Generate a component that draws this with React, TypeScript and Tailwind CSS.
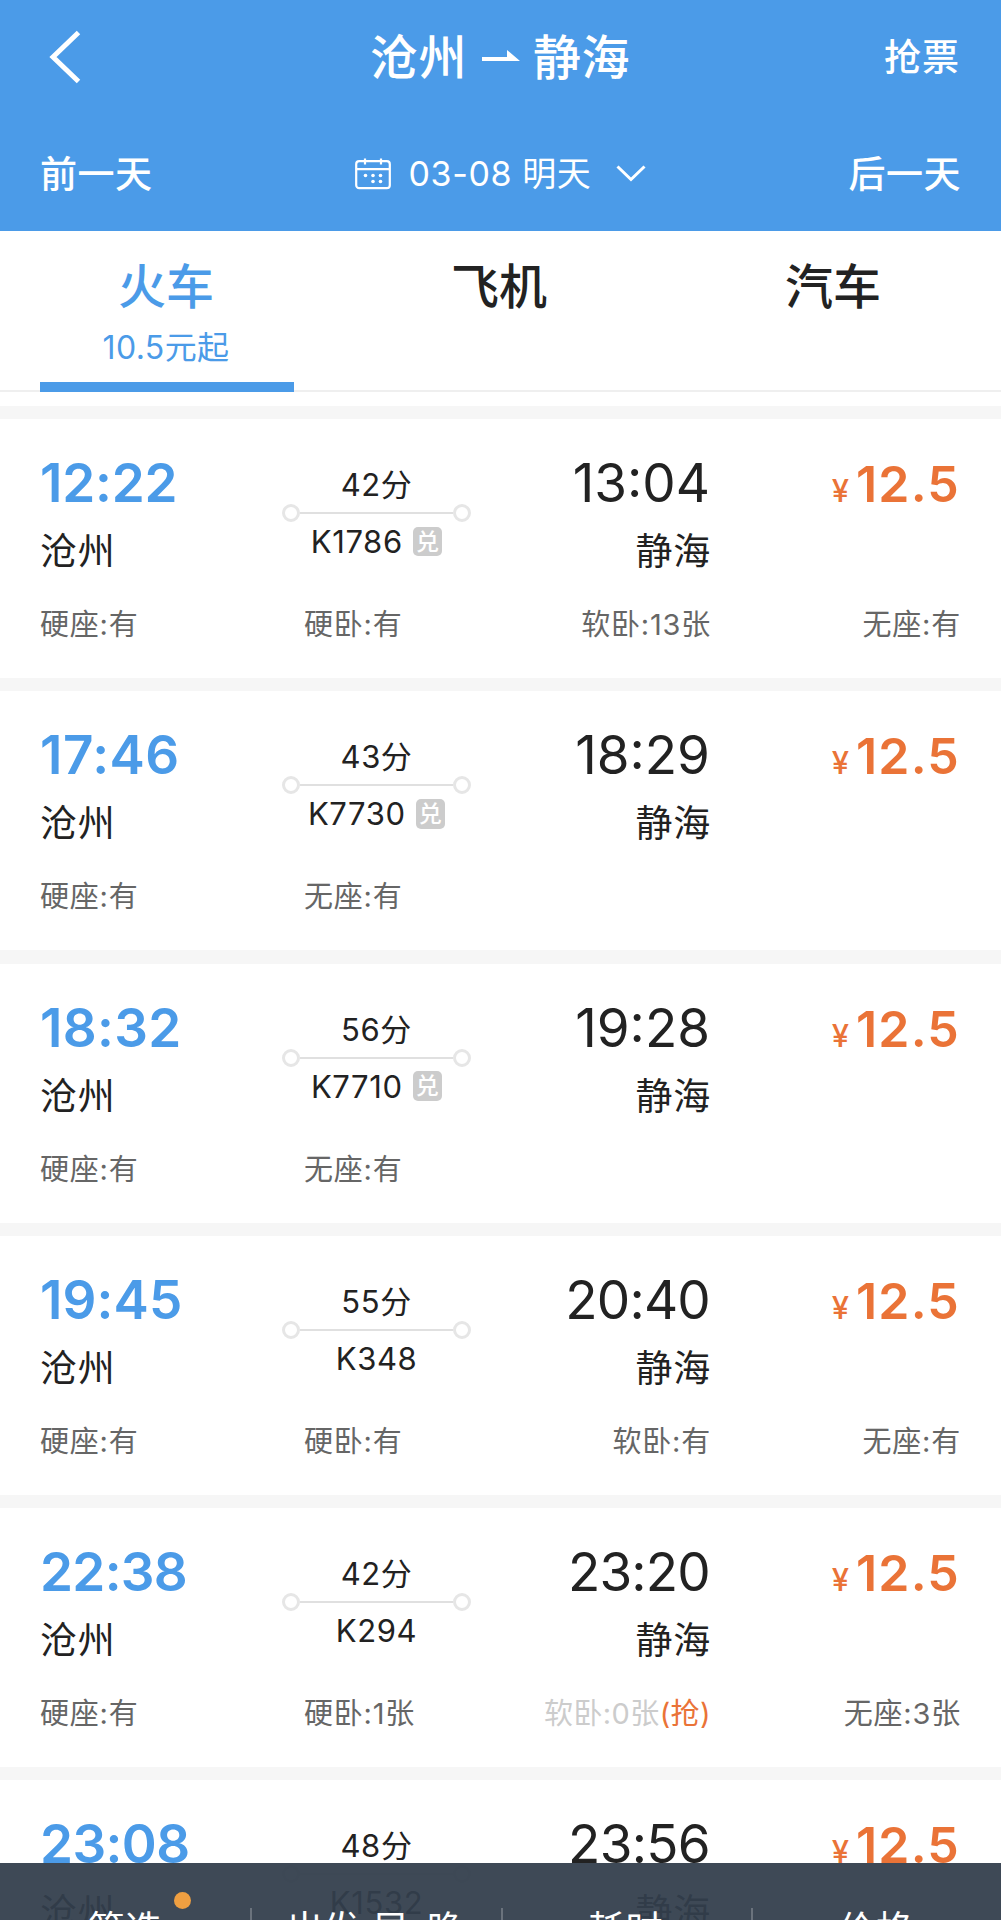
import React from "react";

type Seat = { text: string; empty?: boolean };
type Train = {
  depart: string;
  departTracking: string;
  arrive: string;
  arriveTracking: string;
  duration: string;
  code: string;
  exchange?: boolean;
  seats: Seat[];
};

const trains: Train[] = [
  { depart: "12:22", departTracking: "tracking-[-0.2px]", arrive: "13:04", arriveTracking: "tracking-normal", duration: "42分", code: "K1786", exchange: true, seats: [{ text: "硬座:有" }, { text: "硬卧:有" }, { text: "软卧:13张" }, { text: "无座:有" }] },
  { depart: "17:46", departTracking: "tracking-[0.5px]", arrive: "18:29", arriveTracking: "tracking-normal", duration: "43分", code: "K7730", exchange: true, seats: [{ text: "硬座:有" }, { text: "无座:有" }] },
  { depart: "18:32", departTracking: "tracking-[0.3px]", arrive: "19:28", arriveTracking: "tracking-normal", duration: "56分", code: "K7710", exchange: true, seats: [{ text: "硬座:有" }, { text: "无座:有" }] },
  { depart: "19:45", departTracking: "tracking-[0.1px]", arrive: "20:40", arriveTracking: "tracking-[-0.8px]", duration: "55分", code: "K348", seats: [{ text: "硬座:有" }, { text: "硬卧:有" }, { text: "软卧:有" }, { text: "无座:有" }] },
  { depart: "22:38", departTracking: "tracking-[-0.7px]", arrive: "23:20", arriveTracking: "tracking-[-0.8px]", duration: "42分", code: "K294", seats: [{ text: "硬座:有" }, { text: "硬卧:1张" }, { text: "软卧:0张", empty: true }, { text: "无座:3张" }] },
  { depart: "23:08", departTracking: "tracking-[-0.6px]", arrive: "23:56", arriveTracking: "tracking-[-0.7px]", duration: "48分", code: "K1532", seats: [{ text: "硬座:有" }, { text: "硬卧:有" }, { text: "软卧:有" }, { text: "无座:有" }] },
];

function Header() {
  return (
    <header className="h-[231px] shrink-0 bg-[#4b9be8] text-white">
      <div className="flex h-[114px] items-center justify-between pl-[49px] pr-[41px]">
        <div className="w-[109px]">
          <svg className="block" width="32" height="54" viewBox="0 0 32 54" fill="none" stroke="currentColor" strokeWidth="5">
            <path d="M29.5 2.5 4 27l25.5 24.5" />
          </svg>
        </div>
        <h1 className="flex items-center text-[48px] leading-[60px] font-medium tracking-[0.5px]">
          <span className="pt-[2px]">沧州</span>
          <svg className="ml-[15px] mr-[13px] block" width="38" height="16" viewBox="0 0 38 16" fill="currentColor">
            <path d="M0 8h25V1l13 11H0z" />
          </svg>
          <span className="pt-[2px]">静海</span>
        </h1>
        <button className="w-[118px] pt-[2px] text-right text-[37px] leading-[48px] font-medium tracking-[1px]">抢票</button>
      </div>
      <div className="flex h-[120px] items-center justify-between pl-[40px] pr-[40px]">
        <button className="w-[113px] pt-[2px] text-left text-[37px] leading-[48px] font-medium tracking-[0.5px] whitespace-nowrap">前一天</button>
        <div className="flex items-center">
          <svg className="block" width="36" height="32" viewBox="0 0 36 32" fill="none" stroke="currentColor" strokeWidth="2.2">
            <rect x="1.2" y="3.2" width="33.6" height="27" rx="3" />
            <path d="M1 11.2h34M10 0.5v6M26 0.5v6" />
            <g fill="currentColor" stroke="none">
              <circle cx="10.5" cy="17.5" r="1.8" />
              <circle cx="18" cy="17.5" r="1.8" />
              <circle cx="25.5" cy="17.5" r="1.8" />
              <circle cx="18" cy="23.5" r="1.8" />
              <circle cx="25.5" cy="23.5" r="1.8" />
            </g>
          </svg>
          <span className="ml-[18px] text-[34px] leading-[48px] tracking-[0.6px]">03-08 明天</span>
          <svg className="ml-[25px] block" width="30" height="18" viewBox="0 0 30 18" fill="none" stroke="currentColor" strokeWidth="3">
            <path d="M1.5 1.5 15 14.5 28.5 1.5" />
          </svg>
        </div>
        <button className="w-[113px] pt-[2px] text-right text-[37px] leading-[48px] font-medium tracking-[0.5px] whitespace-nowrap">后一天</button>
      </div>
    </header>
  );
}

function Tabs() {
  return (
    <nav className="flex h-[161px] shrink-0 border-b-2 border-[#efefef] bg-white text-[#222]">
      <div className="relative flex flex-1 flex-col items-center pt-[26px] pr-[1px] text-[#4b9be8]">
        <span className="text-[48px] leading-[60px] font-medium">火车</span>
        <span className="mt-[11px] text-[32px] leading-[40px] tracking-[0.4px]">10.5元起</span>
        <span className="absolute -bottom-[2px] left-[40px] h-[10px] w-[254px] bg-[#4b9be8]" />
      </div>
      <div className="flex flex-1 flex-col items-center pt-[26px] pr-[2px]">
        <span className="text-[48px] leading-[60px] font-medium">飞机</span>
      </div>
      <div className="flex flex-1 flex-col items-center pt-[26px] pr-[2px]">
        <span className="text-[48px] leading-[60px] font-medium">汽车</span>
      </div>
    </nav>
  );
}

function Route({ train }: { train: Train }) {
  return (
    <div className="flex flex-col items-center pt-[48px] text-[31px] tracking-[0.6px]">
      <span className="h-[36px] leading-[36px]">{train.duration}</span>
      <div className="mt-px flex h-[18px] w-full items-center">
        <span className="size-[18px] rounded-full border-[3px] border-[#e6e6e6]" />
        <span className="h-[2px] flex-1 bg-[#e0e0e0]" />
        <span className="size-[18px] rounded-full border-[3px] border-[#e6e6e6]" />
      </div>
      <div className="mt-[2px] flex h-[35px] items-center leading-[35px]">
        <span>{train.code}</span>
        {train.exchange && (
          <span className="ml-[10px] size-[29.5px] rounded-[5px] bg-[#ccc] text-center text-[23px] leading-[30px] font-medium tracking-normal text-white">兑</span>
        )}
      </div>
    </div>
  );
}

function TrainCard({ train }: { train: Train }) {
  return (
    <article className="mb-[13.25px] h-[259px] shrink-0 bg-white pl-[40px] text-[#222]">
      <div className="grid h-[186px] grid-cols-[242px_189px_239px_250px]">
        <div className="flex flex-col pt-[34px]">
          <span className={`text-[53px] leading-[60px] font-semibold text-[#4b9be8] ${train.departTracking}`}>{train.depart}</span>
          <span className="mt-[14px] text-[37px] leading-[50px] tracking-[0.7px]">沧州</span>
        </div>
        <Route train={train} />
        <div className="flex flex-col items-end pt-[34px]">
          <span className={`text-[53px] leading-[60px] ${train.arriveTracking}`}>{train.arrive}</span>
          <span className="mt-[14px] -mr-px text-[37px] leading-[50px] tracking-[0.7px]">静海</span>
        </div>
        <div className="flex items-baseline justify-end pt-[35px] leading-[60px] font-semibold text-[#ea7337]">
          <span className="text-[31px] font-medium">¥</span>
          <span className="ml-[7px] text-[50px] tracking-[1.2px]">12.5</span>
        </div>
      </div>
      <div className="grid grid-cols-[264px_180px_227px_250px] text-[29px] leading-[40px] tracking-[0.8px] whitespace-nowrap text-[#666]">
        {train.seats.map((seat, i) => (
          <span key={i} className={i > 1 ? "text-right" : "text-left"}>
            <span className={seat.empty ? "tracking-[0.4px] text-[#ccc]" : ""}>{seat.text}</span>
            {seat.empty && <span className="tracking-[0.4px] text-[#ea7337]">(抢)</span>}
          </span>
        ))}
      </div>
    </article>
  );
}

function FilterBar() {
  const items = ["筛选", "出发 早-晚", "耗时", "价格"];
  return (
    <footer className="absolute inset-x-0 top-[1863px] grid h-[130px] grid-cols-4 bg-[#323e4b]/94 text-[37px] leading-[48px] text-white">
      {items.map((item, i) => (
        <div key={item} className="relative flex justify-center pt-[43px]">
          <span className="tracking-[0.5px] whitespace-nowrap">{item}</span>
          {i === 0 && <span className="absolute left-[174px] top-[29px] size-[17px] rounded-full bg-[#ef9f41]" />}
          {i < 3 && <span className="absolute -right-[2px] top-[45px] h-[40px] w-[2px] bg-[#6b737d]" />}
        </div>
      ))}
    </footer>
  );
}

export default function App() {
  return (
    <div className="relative flex h-[1920px] w-[1001px] flex-col overflow-hidden bg-white font-['Inter','Noto_Sans_CJK_SC',sans-serif]">
      <Header />
      <Tabs />
      <main className="mt-[14px] flex shrink-0 flex-col bg-[#f6f6f6] pt-[13px]">
        {trains.map((train) => (
          <TrainCard key={train.depart} train={train} />
        ))}
      </main>
      <FilterBar />
    </div>
  );
}
